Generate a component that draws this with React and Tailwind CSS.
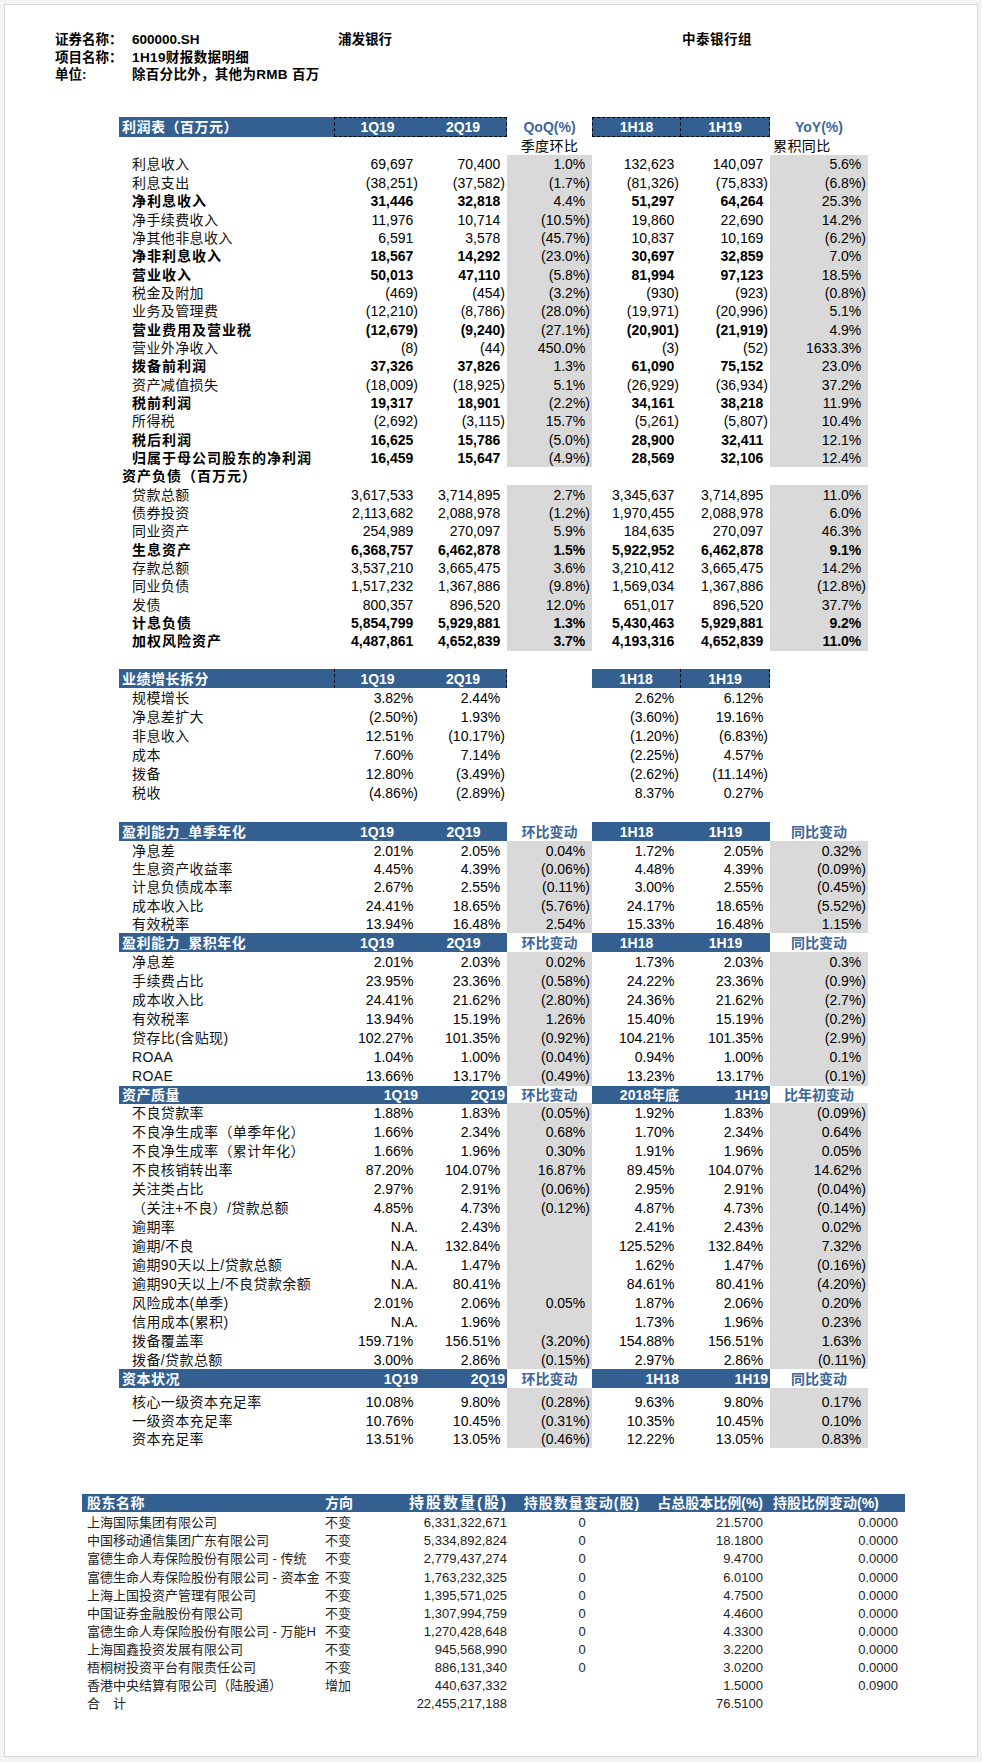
import React from 'react';

const COLS = 'grid grid-cols-[215px_86px_87px_85px_89px_89px_98px]';
const BLUE = 'bg-[#335f91] text-white';
const DASH = 'border-dashed border-black';

function V({ v, bold, gray, end }) {
  const pad = v && !v.endsWith(')') && v !== 'N.A.';
  return (
    <div
      className={`flex justify-end pr-[2px] whitespace-nowrap ${end ? 'items-end pb-[1px]' : 'items-center'} ${gray ? 'bg-[#d9d9d9]' : ''} ${bold ? 'font-bold' : ''}`}
    >
      {v}
      {pad && <span className="invisible">)</span>}
    </div>
  );
}

function DataRow({ r, h, gray = true, mode = 'is', end = false }) {
  const [label, b, c, d, e, f, g, flag] = r;
  const lb = !!flag;
  const pb = mode === 'bs' ? !!flag : false;
  return (
    <div className={`${COLS} ${h} text-[14px] leading-[18px] text-black`}>
      <div className={`flex pl-[13px] whitespace-nowrap ${end ? 'items-end pb-[1px]' : 'items-center'} ${lb ? 'font-bold text-black tracking-[1px]' : 'text-[#111] tracking-[0.4px]'}`}>
        {label}
      </div>
      <V v={b} bold={lb} end={end} />
      <V v={c} bold={lb} end={end} />
      <V v={d} bold={pb} gray={gray} end={end} />
      <V v={e} bold={lb} end={end} />
      <V v={f} bold={lb} end={end} />
      <V v={g} bold={pb} gray={gray} end={end} />
    </div>
  );
}

const IS = [
  ['利息收入', '69,697', '70,400', '1.0%', '132,623', '140,097', '5.6%'],
  ['利息支出', '(38,251)', '(37,582)', '(1.7%)', '(81,326)', '(75,833)', '(6.8%)'],
  ['净利息收入', '31,446', '32,818', '4.4%', '51,297', '64,264', '25.3%', 1],
  ['净手续费收入', '11,976', '10,714', '(10.5%)', '19,860', '22,690', '14.2%'],
  ['净其他非息收入', '6,591', '3,578', '(45.7%)', '10,837', '10,169', '(6.2%)'],
  ['净非利息收入', '18,567', '14,292', '(23.0%)', '30,697', '32,859', '7.0%', 1],
  ['营业收入', '50,013', '47,110', '(5.8%)', '81,994', '97,123', '18.5%', 1],
  ['税金及附加', '(469)', '(454)', '(3.2%)', '(930)', '(923)', '(0.8%)'],
  ['业务及管理费', '(12,210)', '(8,786)', '(28.0%)', '(19,971)', '(20,996)', '5.1%'],
  ['营业费用及营业税', '(12,679)', '(9,240)', '(27.1%)', '(20,901)', '(21,919)', '4.9%', 1],
  ['营业外净收入', '(8)', '(44)', '450.0%', '(3)', '(52)', '1633.3%'],
  ['拨备前利润', '37,326', '37,826', '1.3%', '61,090', '75,152', '23.0%', 1],
  ['资产减值损失', '(18,009)', '(18,925)', '5.1%', '(26,929)', '(36,934)', '37.2%'],
  ['税前利润', '19,317', '18,901', '(2.2%)', '34,161', '38,218', '11.9%', 1],
  ['所得税', '(2,692)', '(3,115)', '15.7%', '(5,261)', '(5,807)', '10.4%'],
  ['税后利润', '16,625', '15,786', '(5.0%)', '28,900', '32,411', '12.1%', 1],
  ['归属于母公司股东的净利润', '16,459', '15,647', '(4.9%)', '28,569', '32,106', '12.4%', 1],
];

const BS = [
  ['贷款总额', '3,617,533', '3,714,895', '2.7%', '3,345,637', '3,714,895', '11.0%'],
  ['债券投资', '2,113,682', '2,088,978', '(1.2%)', '1,970,455', '2,088,978', '6.0%'],
  ['同业资产', '254,989', '270,097', '5.9%', '184,635', '270,097', '46.3%'],
  ['生息资产', '6,368,757', '6,462,878', '1.5%', '5,922,952', '6,462,878', '9.1%', 1],
  ['存款总额', '3,537,210', '3,665,475', '3.6%', '3,210,412', '3,665,475', '14.2%'],
  ['同业负债', '1,517,232', '1,367,886', '(9.8%)', '1,569,034', '1,367,886', '(12.8%)'],
  ['发债', '800,357', '896,520', '12.0%', '651,017', '896,520', '37.7%'],
  ['计息负债', '5,854,799', '5,929,881', '1.3%', '5,430,463', '5,929,881', '9.2%', 1],
  ['加权风险资产', '4,487,861', '4,652,839', '3.7%', '4,193,316', '4,652,839', '11.0%', 1],
];

const GROWTH = [
  ['规模增长', '3.82%', '2.44%', '', '2.62%', '6.12%', ''],
  ['净息差扩大', '(2.50%)', '1.93%', '', '(3.60%)', '19.16%', ''],
  ['非息收入', '12.51%', '(10.17%)', '', '(1.20%)', '(6.83%)', ''],
  ['成本', '7.60%', '7.14%', '', '(2.25%)', '4.57%', ''],
  ['拨备', '12.80%', '(3.49%)', '', '(2.62%)', '(11.14%)', ''],
  ['税收', '(4.86%)', '(2.89%)', '', '8.37%', '0.27%', ''],
];

const Q = [
  ['净息差', '2.01%', '2.05%', '0.04%', '1.72%', '2.05%', '0.32%'],
  ['生息资产收益率', '4.45%', '4.39%', '(0.06%)', '4.48%', '4.39%', '(0.09%)'],
  ['计息负债成本率', '2.67%', '2.55%', '(0.11%)', '3.00%', '2.55%', '(0.45%)'],
  ['成本收入比', '24.41%', '18.65%', '(5.76%)', '24.17%', '18.65%', '(5.52%)'],
  ['有效税率', '13.94%', '16.48%', '2.54%', '15.33%', '16.48%', '1.15%'],
];

const C = [
  ['净息差', '2.01%', '2.03%', '0.02%', '1.73%', '2.03%', '0.3%'],
  ['手续费占比', '23.95%', '23.36%', '(0.58%)', '24.22%', '23.36%', '(0.9%)'],
  ['成本收入比', '24.41%', '21.62%', '(2.80%)', '24.36%', '21.62%', '(2.7%)'],
  ['有效税率', '13.94%', '15.19%', '1.26%', '15.40%', '15.19%', '(0.2%)'],
  ['贷存比(含贴现)', '102.27%', '101.35%', '(0.92%)', '104.21%', '101.35%', '(2.9%)'],
  ['ROAA', '1.04%', '1.00%', '(0.04%)', '0.94%', '1.00%', '0.1%'],
  ['ROAE', '13.66%', '13.17%', '(0.49%)', '13.23%', '13.17%', '(0.1%)'],
];

const AQ = [
  ['不良贷款率', '1.88%', '1.83%', '(0.05%)', '1.92%', '1.83%', '(0.09%)'],
  ['不良净生成率（单季年化）', '1.66%', '2.34%', '0.68%', '1.70%', '2.34%', '0.64%'],
  ['不良净生成率（累计年化）', '1.66%', '1.96%', '0.30%', '1.91%', '1.96%', '0.05%'],
  ['不良核销转出率', '87.20%', '104.07%', '16.87%', '89.45%', '104.07%', '14.62%'],
  ['关注类占比', '2.97%', '2.91%', '(0.06%)', '2.95%', '2.91%', '(0.04%)'],
  ['（关注+不良）/贷款总额', '4.85%', '4.73%', '(0.12%)', '4.87%', '4.73%', '(0.14%)'],
  ['逾期率', 'N.A.', '2.43%', '', '2.41%', '2.43%', '0.02%'],
  ['逾期/不良', 'N.A.', '132.84%', '', '125.52%', '132.84%', '7.32%'],
  ['逾期90天以上/贷款总额', 'N.A.', '1.47%', '', '1.62%', '1.47%', '(0.16%)'],
  ['逾期90天以上/不良贷款余额', 'N.A.', '80.41%', '', '84.61%', '80.41%', '(4.20%)'],
  ['风险成本(单季)', '2.01%', '2.06%', '0.05%', '1.87%', '2.06%', '0.20%'],
  ['信用成本(累积)', 'N.A.', '1.96%', '', '1.73%', '1.96%', '0.23%'],
  ['拨备覆盖率', '159.71%', '156.51%', '(3.20%)', '154.88%', '156.51%', '1.63%'],
  ['拨备/贷款总额', '3.00%', '2.86%', '(0.15%)', '2.97%', '2.86%', '(0.11%)'],
];

const CAP = [
  ['核心一级资本充足率', '10.08%', '9.80%', '(0.28%)', '9.63%', '9.80%', '0.17%'],
  ['一级资本充足率', '10.76%', '10.45%', '(0.31%)', '10.35%', '10.45%', '0.10%'],
  ['资本充足率', '13.51%', '13.05%', '(0.46%)', '12.22%', '13.05%', '0.83%'],
];

const HOLD = [
  ['上海国际集团有限公司', '不变', '6,331,322,671', '0', '21.5700', '0.0000'],
  ['中国移动通信集团广东有限公司', '不变', '5,334,892,824', '0', '18.1800', '0.0000'],
  ['富德生命人寿保险股份有限公司 - 传统', '不变', '2,779,437,274', '0', '9.4700', '0.0000'],
  ['富德生命人寿保险股份有限公司 - 资本金', '不变', '1,763,232,325', '0', '6.0100', '0.0000'],
  ['上海上国投资产管理有限公司', '不变', '1,395,571,025', '0', '4.7500', '0.0000'],
  ['中国证券金融股份有限公司', '不变', '1,307,994,759', '0', '4.4600', '0.0000'],
  ['富德生命人寿保险股份有限公司 - 万能H', '不变', '1,270,428,648', '0', '4.3300', '0.0000'],
  ['上海国鑫投资发展有限公司', '不变', '945,568,990', '0', '3.2200', '0.0000'],
  ['梧桐树投资平台有限责任公司', '不变', '886,131,340', '0', '3.0200', '0.0000'],
  ['香港中央结算有限公司（陆股通）', '增加', '440,637,332', '', '1.5000', '0.0900'],
  ['合\u3000计', '', '22,455,217,188', '', '76.5100', ''],
];

function HeadIS() {
  return (
    <div className={`${COLS} h-[19.5px] text-[14px] font-bold leading-[18px]`}>
      <div className={`${BLUE} flex items-center pl-[3px] tracking-[0.5px]`}>利润表（百万元）</div>
      <div className={`${BLUE} flex items-center justify-center border-y border-l ${DASH}`}>1Q19</div>
      <div className={`${BLUE} flex items-center justify-center border-y border-r ${DASH}`}>2Q19</div>
      <div className="flex items-center justify-center text-[#3d6699]">QoQ(%)</div>
      <div className={`${BLUE} flex items-center justify-center border ${DASH}`}>1H18</div>
      <div className={`${BLUE} flex items-center justify-center border-y border-r ${DASH}`}>1H19</div>
      <div className="flex items-center justify-center text-[#3d6699]">YoY(%)</div>
    </div>
  );
}

function HeadGrowth() {
  return (
    <div className={`${COLS} h-[19.5px] text-[14px] font-bold leading-[18px]`}>
      <div className={`${BLUE} flex items-center pl-[3px] tracking-[0.5px]`}>业绩增长拆分</div>
      <div className={`${BLUE} flex items-center justify-center border-l ${DASH}`}>1Q19</div>
      <div className={`${BLUE} flex items-center justify-center border-r ${DASH}`}>2Q19</div>
      <div />
      <div className={`${BLUE} flex items-center justify-center border-r ${DASH}`}>1H18</div>
      <div className={`${BLUE} flex items-center justify-center border-r ${DASH}`}>1H19</div>
      <div />
    </div>
  );
}

function HeadCenter({ title, h, e = '1H18', mid = '环比变动', last = '同比变动' }) {
  return (
    <div className={`${COLS} ${h} text-[14px] font-bold leading-[18px]`}>
      <div className={`${BLUE} flex items-center pl-[3px] tracking-[0.5px]`}>{title}</div>
      <div className={`${BLUE} flex items-center justify-center`}>1Q19</div>
      <div className={`${BLUE} flex items-center justify-center`}>2Q19</div>
      <div className="flex items-center justify-center text-[#3d6699]">{mid}</div>
      <div className={`${BLUE} flex items-center justify-center`}>{e}</div>
      <div className={`${BLUE} flex items-center justify-center`}>1H19</div>
      <div className="flex items-center justify-center text-[#3d6699]">{last}</div>
    </div>
  );
}

function HeadRight({ title, h, e = '1H18', last = '同比变动' }) {
  return (
    <div className={`${COLS} ${h} text-[14px] font-bold leading-[18px]`}>
      <div className={`${BLUE} flex items-center pl-[3px] tracking-[0.5px]`}>{title}</div>
      <div className={`${BLUE} flex items-center justify-end pr-[2px]`}>1Q19</div>
      <div className={`${BLUE} flex items-center justify-end pr-[2px]`}>2Q19</div>
      <div className="flex items-center justify-center text-[#3d6699]">环比变动</div>
      <div className={`${BLUE} flex items-center justify-end pr-[2px]`}>{e}</div>
      <div className={`${BLUE} flex items-center justify-end pr-[2px]`}>1H19</div>
      <div className="flex items-center justify-center text-[#3d6699]">{last}</div>
    </div>
  );
}

const HCOLS = 'grid grid-cols-[238px_52px_137px_146px_110px_140px]';

export default function App() {
  return (
    <div className="min-h-screen bg-[#f4f4f4] p-[4px] font-['Liberation_Sans','Noto_Sans_CJK_SC',sans-serif] text-black">
      <div className="w-[974px] h-[1753px] bg-white border border-[#dadada] shadow-[0_0_2px_rgba(0,0,0,0.08)] flex flex-col">
        {/* Info block */}
        <div className="ml-[50px] mt-[26px] flex flex-col text-[13.5px] font-bold leading-[17.5px]">
          <div className="flex h-[17.5px] items-center">
            <div className="w-[77px]">证券名称：</div>
            <div className="w-[206px]">600000.SH</div>
            <div className="w-[344px]">浦发银行</div>
            <div className="tracking-[0.5px]">中泰银行组</div>
          </div>
          <div className="flex h-[17.5px] items-center">
            <div className="w-[77px]">项目名称：</div>
            <div className="tracking-[0.4px]">1H19财报数据明细</div>
          </div>
          <div className="flex h-[17.5px] items-center">
            <div className="w-[77px]">单位:</div>
            <div className="tracking-[0.3px]">除百分比外，其他为RMB 百万</div>
          </div>
        </div>

        {/* Main table */}
        <div className="ml-[114px] mt-[33px] w-[749px] flex flex-col">
          <HeadIS />
          <div className={`${COLS} h-[19.3px] text-[14px] leading-[18px]`}>
            <div />
            <div />
            <div />
            <div className="flex items-center justify-center tracking-[0.4px]">季度环比</div>
            <div />
            <div />
            <div className="flex items-center pl-[3px] tracking-[0.4px]">累积同比</div>
          </div>
          {IS.map((r, i) => (
            <DataRow key={'is' + i} r={r} h="h-[18.35px]" mode="is" />
          ))}
          <div className={`${COLS} h-[18.35px] text-[14px] leading-[18px]`}>
            <div className="flex items-center pl-[3px] font-bold whitespace-nowrap tracking-[1px]">资产负债（百万元）</div>
          </div>
          {BS.map((r, i) => (
            <DataRow key={'bs' + i} r={r} h="h-[18.35px]" mode="bs" />
          ))}
          <div className="h-[18.35px]" />
          <HeadGrowth />
          {GROWTH.map((r, i) => (
            <DataRow key={'g' + i} r={r} h="h-[19px]" gray={false} />
          ))}
          <div className="h-[20px]" />
          <HeadCenter title="盈利能力_单季年化" h="h-[19px]" />
          {Q.map((r, i) => (
            <DataRow key={'q' + i} r={r} h="h-[18.4px]" />
          ))}
          <HeadCenter title="盈利能力_累积年化" h="h-[19px]" />
          {C.map((r, i) => (
            <DataRow key={'c' + i} r={r} h="h-[19.05px]" />
          ))}
          <HeadRight title="资产质量" h="h-[17.5px]" e="2018年底" last="比年初变动" />
          {AQ.map((r, i) => (
            <DataRow key={'aq' + i} r={r} h="h-[19px]" />
          ))}
          <HeadRight title="资本状况" h="h-[19px]" />
          {CAP.map((r, i) => (
            <DataRow key={'cap' + i} r={r} h={i === 0 ? 'h-[24px]' : 'h-[18px]'} end={i === 0} />
          ))}
        </div>

        {/* Shareholders */}
        <div className="ml-[77px] mt-[46px] w-[823px] flex flex-col">
          <div className={`${HCOLS} h-[18px] ${BLUE} text-[14px] font-bold leading-[18px]`}>
            <div className="flex items-center pl-[5px] tracking-[0.5px]">股东名称</div>
            <div className="flex items-center pl-[5px]">方向</div>
            <div className="flex items-center justify-end pr-[1px] text-[15px] tracking-[2px]">持股数量(股)</div>
            <div className="flex items-center justify-center tracking-[1px]">持股数量变动(股)</div>
            <div className="flex items-center justify-end pr-[2px]">占总股本比例(%)</div>
            <div className="flex items-center pl-[8px]">持股比例变动(%)</div>
          </div>
          <div className="h-[2px]" />
          {HOLD.map((r, i) => (
            <div key={'h' + i} className={`${HCOLS} h-[18.1px] text-[13px] leading-[18px] text-[#222]`}>
              <div className="flex items-center pl-[5px] whitespace-nowrap">{r[0]}</div>
              <div className="flex items-center pl-[5px]">{r[1]}</div>
              <div className="flex items-center justify-end pr-[2px]">{r[2]}</div>
              <div className="flex items-center justify-center">{r[3]}</div>
              <div className="flex items-center justify-end pr-[2px]">{r[4]}</div>
              <div className="flex items-center justify-end pr-[7px]">{r[5]}</div>
            </div>
          ))}
        </div>
      </div>
    </div>
  );
}
